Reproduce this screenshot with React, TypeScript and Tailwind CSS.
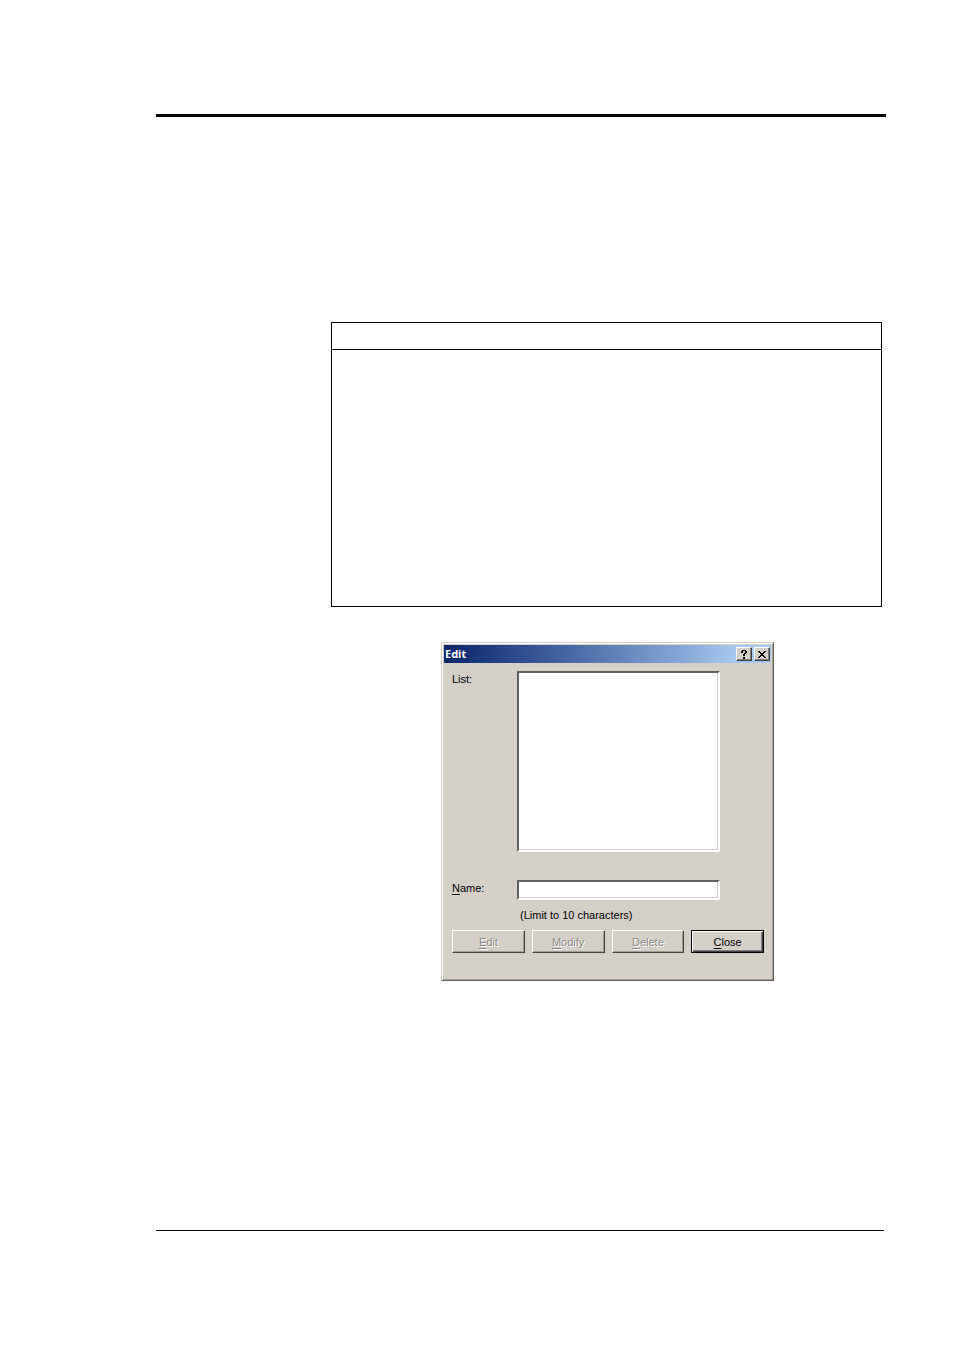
import type { ReactNode } from "react";

interface DialogButtonProps {
  accessKey: string;
  rest: string;
  disabled?: boolean;
  primary?: boolean;
}

function DialogButton({ accessKey, rest, disabled = false, primary = false }: DialogButtonProps) {
  return (
    <button
      type="button"
      disabled={disabled}
      className={`h-[23px] border bg-[#d4d0c8] text-center text-[11px] leading-4 ${
        primary
          ? "border-black text-black shadow-[inset_1px_1px_0_#ffffff,inset_-1px_-1px_0_#404040,inset_-2px_-2px_0_#808080]"
          : "border-t-white border-l-white border-r-[#404040] border-b-[#404040] text-[#8c8983] shadow-[inset_-1px_-1px_0_#a09d96] [text-shadow:1px_1px_0_#ffffff]"
      }`}
    >
      <span className="underline underline-offset-2">{accessKey}</span>
      {rest}
    </button>
  );
}

function TitleButton({ label, children }: { label: string; children: ReactNode }) {
  return (
    <button
      type="button"
      aria-label={label}
      className="flex h-[14px] w-4 items-center justify-center border border-t-white border-l-white border-r-[#404040] border-b-[#404040] bg-[#d4d0c8] shadow-[inset_-1px_-1px_0_#808080]"
    >
      {children}
    </button>
  );
}

function EditDialog() {
  const fieldClass =
    "block w-full appearance-none rounded-none border-2 border-t-[#606060] border-l-[#606060] border-r-white border-b-white bg-white text-[11px] outline-none shadow-[inset_-1px_-1px_0_#d4d0c8]";

  return (
    <section
      aria-label="Edit"
      className="w-[333px] border border-t-[#d4d0c8] border-l-[#d4d0c8] border-r-[#606060] border-b-[#606060] bg-[#d4d0c8] p-px shadow-[inset_1px_1px_0_#ffffff,inset_-1px_-1px_0_#a8a49c]"
    >
      <header className="m-px flex h-[18px] items-center bg-linear-to-r from-[#0a246a] to-[#a6caf0] to-90% pr-px pl-px">
        <h1 className="flex-1 font-['Noto_Sans',sans-serif] text-[11px] leading-4 font-bold text-white">Edit</h1>
        <div className="flex gap-0.5">
          <TitleButton label="Help">
            <svg width="8" height="9" viewBox="0 0 8 9" fill="#000" shapeRendering="crispEdges">
              <path d="M2 0h4v1H2zM1 1h2v2H1zM5 1h2v2H5zM4 3h2v1H4zM3 4h2v2H3zM3 7h2v2H3z" />
            </svg>
          </TitleButton>
          <TitleButton label="Close window">
            <svg width="8" height="7" viewBox="0 0 8 7" fill="#000" shapeRendering="crispEdges">
              <path d="M0 0h2v1H0zM6 0h2v1H6zM1 1h2v1H1zM5 1h2v1H5zM2 2h4v1H2zM3 3h2v1H3zM2 4h4v1H2zM1 5h2v1H1zM5 5h2v1H5zM0 6h2v1H0zM6 6h2v1H6z" />
            </svg>
          </TitleButton>
        </div>
      </header>

      <form className="px-2 pt-[7px] pb-[26px] text-[11px] leading-4" onSubmit={e => e.preventDefault()}>
        <div className="grid grid-cols-[66px_203px]">
          <label htmlFor="list" className="pl-px">List:</label>
          <select id="list" size={10} className={`${fieldClass} h-[181px]`} />
        </div>
        <div className="mt-7 grid grid-cols-[66px_203px]">
          <label htmlFor="name" className="pl-px">
            <span className="underline underline-offset-2">N</span>ame:
          </label>
          <input id="name" type="text" maxLength={10} className={`${fieldClass} h-5`} />
          <p className="col-start-2 mt-[7px] pl-[3px] whitespace-nowrap">(Limit to 10 characters)</p>
        </div>
        <div className="mt-[7px] grid grid-cols-4 gap-[7px] pl-px">
          <DialogButton accessKey="E" rest="dit" disabled />
          <DialogButton accessKey="M" rest="odify" disabled />
          <DialogButton accessKey="D" rest="elete" disabled />
          <DialogButton accessKey="C" rest="lose" primary />
        </div>
      </form>
    </section>
  );
}

export default function App() {
  return (
    <main className="min-h-screen bg-white pt-[114px] pr-[68px] pb-[119px] pl-[156px] font-['Liberation_Sans',sans-serif] text-black">
      <div className="h-[3px] bg-black" />

      <div className="mt-[205px] mr-1 ml-[175px] border border-black">
        <div className="h-[27px] border-b border-black" />
        <div className="h-64" />
      </div>

      <div className="mt-[35px] ml-[285px]">
        <EditDialog />
      </div>

      <div className="mt-[249px] mr-0.5 h-px bg-black" />
    </main>
  );
}
